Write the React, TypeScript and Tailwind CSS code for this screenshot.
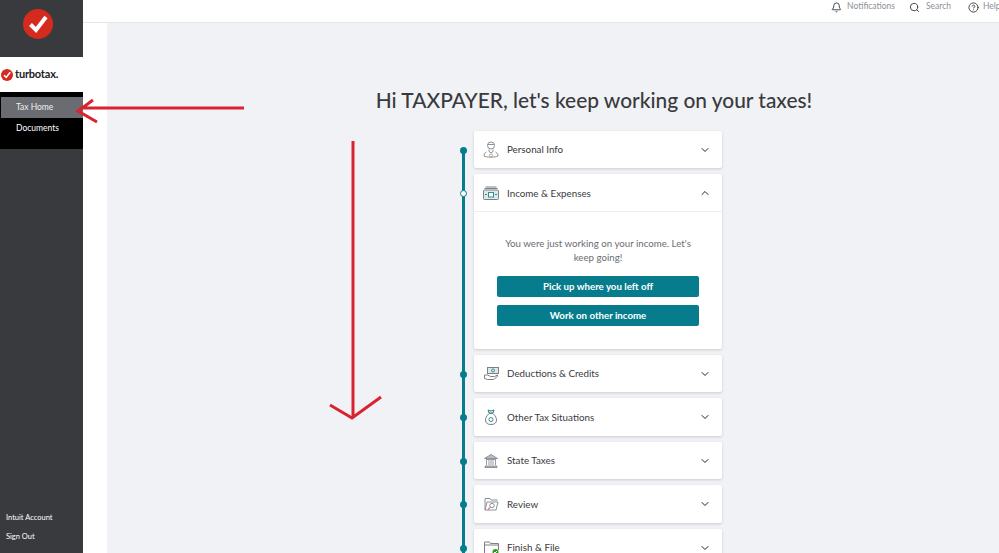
import { Bell, ChevronDown, ChevronUp, CircleHelp, Search } from 'lucide-react';
import type { ReactNode } from 'react';

function Check({ size }: { size: number }) {
  return (
    <svg width={size} height={size} viewBox="0 0 30 30">
      <circle cx="15" cy="15" r="15" fill="#d52b1e" />
      <path d="M7.5 15.5 L13 21 L23 8" fill="none" stroke="#fff" strokeWidth="4" />
    </svg>
  );
}

const personIcon = (
  <svg width="16" height="18" viewBox="0 0 16 18" fill="none" stroke="#8d9096" strokeWidth="1">
    <circle cx="8" cy="4.5" r="3.5" />
    <path d="M4.5 3.5h7M6 8.5v2l2 1.5 2-1.5v-2M3.5 11C1.5 12 1 13.5 1 15c2 1.5 12 1.5 14 0 0-1.500-.5-3-2.500-4" />
    <circle cx="8" cy="14.500" r="1.500" stroke="#c9a08a" />
  </svg>
);

const incomeIcon = (
  <svg width="16" height="14" viewBox="0 0 16 14" fill="none" stroke="#7c8086" strokeWidth="1">
    <path d="M2.500 1h11M1.500 2.500h13" />
    <rect x="0.500" y="4" width="15" height="9.500" rx="1" fill="#dfe8e8" />
    <rect x="5.500" y="6.500" width="5" height="4.500" fill="#fff" stroke="#2f8f8f" />
    <path d="M2 8.500h2M12 8.500h2" stroke="#2f8f8f" />
  </svg>
);

const deductionsIcon = (
  <svg width="15" height="13" viewBox="0 0 15 13" fill="none" stroke="#7c8086" strokeWidth="1">
    <rect x="3.500" y="0.500" width="11" height="6" fill="#dfe8e8" />
    <circle cx="9" cy="3.500" r="1.500" stroke="#2f8f8f" />
    <path d="M0.500 8h3l3 1.500h4l3-1.500v1.500l-4 3h-6l-3-1z" fill="#fff" />
  </svg>
);

const moneyBagIcon = (
  <svg width="12" height="16" viewBox="0 0 12 16" fill="none" stroke="#7c8086" strokeWidth="1">
    <path d="M3 1l3 1 3-1-1 3H4z" fill="#dfe8e8" stroke="#2f8f8f" />
    <path d="M4 4.500C1.500 7 .5 9 .5 11c0 3 2 4.500 5.500 4.500s5.500-1.500 5.500-4.500c0-2-1-4-3.500-6.500z" />
    <circle cx="6" cy="10.500" r="2" stroke="#2f8f8f" />
  </svg>
);

const bankIcon = (
  <svg width="14" height="14" viewBox="0 0 14 14" fill="#b9bcc2" stroke="#7c8086" strokeWidth="0.800">
    <path d="M7 .5L13.500 4.500H.500z" />
    <path d="M2 5.500h10M2.500 6v5M5 6v5M7 6v5M9 6v5M11.500 6v5" />
    <path d="M1 12h12v1.500H1z" />
  </svg>
);

const reviewIcon = (
  <svg width="15" height="14" viewBox="0 0 15 14" fill="none" stroke="#8d9096" strokeWidth="1">
    <path d="M1 13V1.500h5l1 1.500h6.500M1 13h11l2-8H3L1 13z" />
    <circle cx="8" cy="8.500" r="2.200" />
    <path d="M6.300 10.300L3.800 12.500" stroke="#d52b1e" />
  </svg>
);

const finishIcon = (
  <svg width="15" height="14" viewBox="0 0 15 14" fill="none" stroke="#7c8086" strokeWidth="1">
    <path d="M.5 13V1h5l1 1.500h8V9M.5 4h14M.5 13H9" />
    <circle cx="11.500" cy="11" r="3" fill="#2ca01c" stroke="none" />
    <path d="M10 11l1 1 2-2" stroke="#fff" />
  </svg>
);

function StepCard({ icon, label, open, children }: { icon: ReactNode; label: string; open?: boolean; children?: ReactNode }) {
  return (
    <div className="relative w-[248px] shrink-0 rounded-[2px] bg-white shadow-[0_1px_3px_rgba(0,0,0,0.16)]">
      <span
        className={
          open
            ? 'absolute left-[-14.500px] top-[16px] h-[7px] w-[7px] rounded-full border border-[#077c8c] bg-white'
            : 'absolute left-[-14.500px] top-[16px] h-[7px] w-[7px] rounded-full bg-[#077c8c]'
        }
      />
      <div className={open ? 'flex h-[38px] items-center border-b border-[#eceef1] pl-[9px] pr-[11.500px] pt-[1px]' : 'flex h-[37.500px] items-center pl-[9px] pr-[11.500px] pt-[1px]'}>
        <div className="flex w-[16px] justify-center">{icon}</div>
        <span className="ml-[8px] grow text-[9.800px] text-[#393a3d]">{label}</span>
        {open ? <ChevronUp size={12} strokeWidth={2} color="#222" /> : <ChevronDown size={12} strokeWidth={2} color="#222" />}
      </div>
      {children}
    </div>
  );
}

export default function App() {
  return (
    <div className="relative flex h-[553px] w-[999px] overflow-hidden bg-white font-['Lato','Noto_Sans',sans-serif]">
      <aside className="flex w-[83px] shrink-0 flex-col bg-[#393a3d] text-[8.500px] text-white">
        <div className="flex h-[57px] items-start pl-[23px] pt-[9px]">
          <Check size={30} />
        </div>
        <div className="flex h-[35px] items-center gap-[2px] bg-white pl-[1px]">
          <Check size={12} />
          <span className="text-[11px] font-bold tracking-[-0.2px] text-[#222]">turbotax.</span>
        </div>
        <nav className="flex h-[57px] flex-col bg-black pt-[5px]">
          <div className="ml-[1px] flex h-[21px] items-center bg-[#6b6c72] pl-[15px] text-[#eee]">Tax Home</div>
          <div className="flex h-[21px] items-center pl-[16px]">Documents</div>
        </nav>
        <div className="mt-auto flex flex-col gap-[9px] pb-[11px] pl-[6px] text-[7.500px] leading-[10px]">
          <span>Intuit Account</span>
          <span>Sign Out</span>
        </div>
      </aside>

      <div className="flex min-w-0 grow flex-col">
        <header className="flex h-[23px] shrink-0 items-start justify-end border-b border-[#e3e5e8] bg-white pt-[1px] text-[8.500px] text-[#8d9096]">
          <div className="flex items-center gap-[5px]">
            <Bell size={11} color="#393a3d" />
            <span className="-translate-y-[1px]">Notifications</span>
          </div>
          <div className="ml-[14px] flex items-center gap-[6px]">
            <Search size={11} color="#393a3d" />
            <span className="-translate-y-[1px]">Search</span>
          </div>
          <div className="ml-[17px] flex w-[31px] items-center gap-[4px] overflow-hidden">
            <CircleHelp size={11} color="#393a3d" className="shrink-0" />
            <span className="-translate-y-[1px]">Help</span>
          </div>
        </header>

        <div className="flex min-h-0 grow pl-[24px]">
          <main className="flex min-w-0 grow flex-col items-center bg-[#f1f2f6] pt-[65px]">
            <h1 className="ml-[82px] whitespace-nowrap text-[20.900px] font-medium leading-[24px] text-[#393a3d]">
              Hi TAXPAYER, let's keep working on your taxes!
            </h1>

            <div className="relative ml-[90px] mt-[18.500px] flex flex-col gap-[6px]">
              <div className="absolute left-[-12px] top-[19px] h-[500px] w-[3px] bg-[#077c8c]" />
              <StepCard icon={personIcon} label="Personal Info" />
              <StepCard icon={incomeIcon} label="Income & Expenses" open>
                <div className="flex h-[136.500px] flex-col items-center px-[23px] pt-[23.500px]">
                  <p className="text-center text-[9.700px] leading-[14.500px] text-[#6b6c72]">
                    You were just working on your income. Let's keep going!
                  </p>
                  <button className="mt-[11px] h-[21px] w-[202px] shrink-0 rounded-[2px] bg-[#077c8c] text-[9.700px] font-bold text-white">
                    Pick up where you left off
                  </button>
                  <button className="mt-[8px] h-[21px] w-[202px] shrink-0 rounded-[2px] bg-[#077c8c] text-[9.700px] font-bold text-white">
                    Work on other income
                  </button>
                </div>
              </StepCard>
              <StepCard icon={deductionsIcon} label="Deductions & Credits" />
              <StepCard icon={moneyBagIcon} label="Other Tax Situations" />
              <StepCard icon={bankIcon} label="State Taxes" />
              <StepCard icon={reviewIcon} label="Review" />
              <StepCard icon={finishIcon} label="Finish & File" />
            </div>
          </main>
        </div>
      </div>

      {/* red annotation arrows drawn over the page */}
      <svg className="pointer-events-none absolute left-0 top-0" width="999" height="553" fill="none" stroke="#d9232e" strokeWidth="3">
        <path d="M244 108H80M93 100L78 111L97 122" />
        <path d="M353 141V417M330 405L352 418L381 397" />
      </svg>
    </div>
  );
}
